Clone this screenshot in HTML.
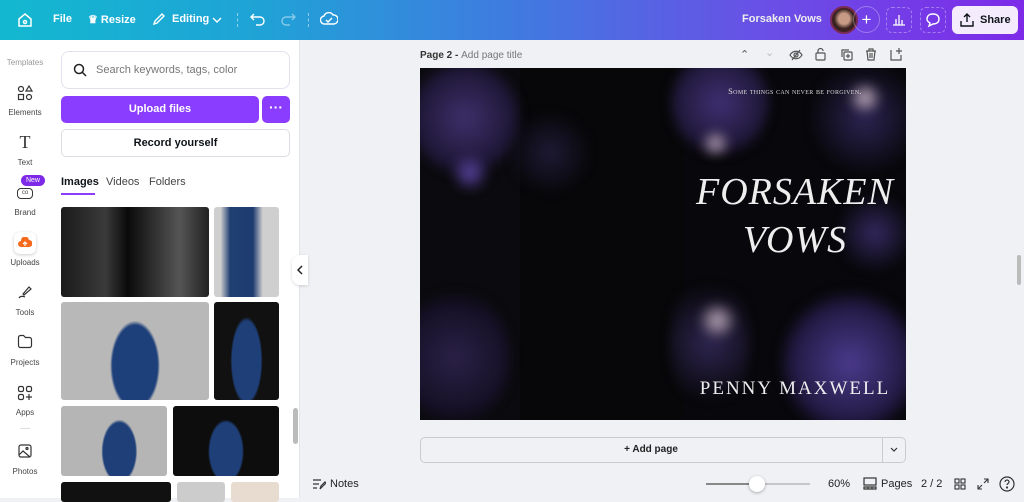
<!DOCTYPE html>
<html><head><meta charset="utf-8"><style>
*{margin:0;padding:0;box-sizing:border-box}
body{width:1024px;height:498px;overflow:hidden;font-family:"Liberation Sans",sans-serif;background:#f0f1f5;position:relative;color:#0e1318}
.hdr{position:absolute;left:0;top:0;width:1024px;height:40px;background:linear-gradient(90deg,#13b8d0 0%,#1fa3d6 25%,#3f7be0 50%,#6a4fe6 75%,#7d2ae8 100%);color:#fff;font-size:11px;font-weight:bold}
.hdr span{position:absolute;top:13px}
.ab{position:absolute;top:7px;width:26px;height:26px;border:1px dashed rgba(255,255,255,.35);border-radius:6px}
.nav{position:absolute;left:0;top:40px;width:50px;height:458px;background:#fff}
.nav div{position:absolute;left:0;width:50px;text-align:center;font-size:8px;color:#444}
.panel{position:absolute;left:50px;top:40px;width:250px;height:458px;background:#fff;border-right:1px solid #e3e4e8}
.img{position:absolute;border-radius:3px}
.cv{position:absolute;left:420px;top:68px;width:486px;height:352px;background:#050507;overflow:hidden}
.bl{position:absolute;border-radius:50%;filter:blur(5px)}
.ic{position:absolute;font-size:11px;color:#555}
</style></head><body>
<div class="hdr">
<svg style="position:absolute;left:17px;top:12px" width="16" height="16" viewBox="0 0 16 16" fill="none" stroke="#fff" stroke-width="1.5"><path d="M2 7L8 2l6 5v7H2z"/><circle cx="8" cy="10" r="1.5"/></svg>
<span style="left:53px">File</span>
<span style="left:88px">♛ Resize</span>
<svg style="position:absolute;left:152px;top:12px" width="14" height="14" viewBox="0 0 14 14" fill="none" stroke="#fff" stroke-width="1.4"><path d="M2 12l1-3 7-7 2 2-7 7z"/></svg>
<span style="left:172px">Editing</span>
<svg style="position:absolute;left:212px;top:16px" width="10" height="8" viewBox="0 0 10 8" fill="none" stroke="#fff" stroke-width="1.4"><path d="M1 2l4 4 4-4"/></svg>
<div style="position:absolute;left:237px;top:13px;width:1px;height:14px;border-left:1px dashed rgba(255,255,255,.5)"></div>
<svg style="position:absolute;left:250px;top:12px" width="16" height="14" viewBox="0 0 16 14" fill="none" stroke="#fff" stroke-width="1.4"><path d="M4 2L1 5l3 3M1 5h9a4 4 0 010 8H6"/></svg>
<svg style="position:absolute;left:280px;top:12px" width="16" height="14" viewBox="0 0 16 14" fill="none" stroke="rgba(255,255,255,.45)" stroke-width="1.4"><path d="M12 2l3 3-3 3M15 5H6a4 4 0 000 8h4"/></svg>
<div style="position:absolute;left:308px;top:13px;width:1px;height:14px;border-left:1px dashed rgba(255,255,255,.5)"></div>
<svg style="position:absolute;left:320px;top:11px" width="18" height="16" viewBox="0 0 18 16" fill="none" stroke="#fff" stroke-width="1.4"><path d="M5 13a4 4 0 01-1-8 5 5 0 019-1 4 4 0 011 9z"/><path d="M6 9l2 2 4-4"/></svg>
<span style="left:742px;font-weight:bold;color:#eee">Forsaken Vows</span>
<div style="position:absolute;left:830px;top:6px;width:28px;height:28px;border-radius:50%;background:radial-gradient(circle at 50% 45%,#c79a86 0 30%,#3a2220 55%);border:2px solid #7a2a55"></div>
<div style="position:absolute;left:853px;top:6px;width:27px;height:27px;border-radius:50%;border:1px solid rgba(255,255,255,.3);text-align:center;line-height:25px;font-size:17px;font-weight:normal">+</div>
<div class="ab" style="left:886px"></div>
<svg style="position:absolute;left:892px;top:13px" width="14" height="13" viewBox="0 0 14 13" fill="none" stroke="#fff" stroke-width="1.3"><path d="M1 12h12M4 12V6M7 12V2M10 12V7"/></svg>
<div class="ab" style="left:920px"></div>
<svg style="position:absolute;left:925px;top:12px" width="16" height="16" viewBox="0 0 16 16" fill="none" stroke="#fff" stroke-width="1.4"><path d="M8 2c4 0 6 2 6 5s-2 5-6 5l-4 2 1-3c-2-1-3-2-3-4 0-3 2-5 6-5z"/></svg>
<div style="position:absolute;left:952px;top:6px;width:66px;height:28px;border-radius:6px;background:#f4ecfd;color:#0e1318;font-size:11px;line-height:28px;padding-left:28px">Share</div>
<svg style="position:absolute;left:960px;top:13px" width="14" height="14" viewBox="0 0 14 14" fill="none" stroke="#0e1318" stroke-width="1.4"><path d="M7 9V1M4 4l3-3 3 3M1 8v5h12V8"/></svg>
</div>

<div class="nav">
<div style="top:18px;color:#999">Templates</div>
<svg style="position:absolute;left:17px;top:45px" width="16" height="16" viewBox="0 0 16 16" fill="none" stroke="#333" stroke-width="1.2"><circle cx="4" cy="4" r="2.5"/><path d="M12 1l3 5H9z"/><rect x="1.5" y="9.5" width="5" height="5"/><circle cx="12" cy="12" r="2.5"/></svg>
<div style="top:68px">Elements</div>
<div style="top:92px;font-size:18px;font-family:'Liberation Serif',serif;color:#333">T</div>
<div style="top:118px">Text</div>
<div style="top:135px;left:21px;width:24px;height:11px;border-radius:6px;background:#7d2ae8;color:#fff;font-size:7px;line-height:11px">New</div>
<div style="top:148px;left:17px;width:16px;height:11px;border:1.2px solid #333;border-radius:4px;font-size:6px;line-height:9px">co</div>
<div style="top:168px">Brand</div>
<div style="top:192px;left:14px;width:22px;height:22px;border-radius:6px;background:#fff;box-shadow:0 1px 3px rgba(0,0,0,.2)"></div>
<svg style="position:absolute;left:18px;top:197px" width="14" height="11" viewBox="0 0 14 11"><path d="M3 10a3 3 0 010-6 4 4 0 018-1 3 3 0 010 7z" fill="#f56a1d"/><path d="M7 9V5M5 7l2-2 2 2" stroke="#fff" stroke-width="1.2" fill="none"/></svg>
<div style="top:218px">Uploads</div>
<svg style="position:absolute;left:17px;top:244px" width="16" height="16" viewBox="0 0 16 16" fill="none" stroke="#333" stroke-width="1.2"><path d="M6 10l6-7 2 2-7 6zM2 14c1-2 4-2 6-1"/></svg>
<div style="top:268px">Tools</div>
<svg style="position:absolute;left:17px;top:294px" width="16" height="15" viewBox="0 0 16 15" fill="none" stroke="#333" stroke-width="1.2"><path d="M1.5 3.5a2 2 0 012-2h3l2 2h4a2 2 0 012 2v6a2 2 0 01-2 2h-9a2 2 0 01-2-2z"/></svg>
<div style="top:318px">Projects</div>
<svg style="position:absolute;left:17px;top:345px" width="16" height="16" viewBox="0 0 16 16" fill="none" stroke="#333" stroke-width="1.2"><rect x="1.5" y="1.5" width="5" height="5" rx="1.5"/><rect x="9.5" y="1.5" width="5" height="5" rx="1.5"/><rect x="1.5" y="9.5" width="5" height="5" rx="1.5"/><path d="M12 9v6M9 12h6"/></svg>
<div style="top:368px">Apps</div>
<div style="top:388px;left:20px;width:10px;height:1px;background:#ddd"></div>
<svg style="position:absolute;left:18px;top:404px" width="14" height="14" viewBox="0 0 14 14" fill="none" stroke="#333" stroke-width="1.2"><rect x="1" y="1" width="12" height="12" rx="2"/><circle cx="9" cy="4.5" r="1"/><path d="M1 11l4-4 7 6"/></svg>
<div style="top:427px">Photos</div>
</div>

<div class="panel">
<div style="position:absolute;left:11px;top:11px;width:229px;height:38px;border:1px solid #e2e1f0;border-radius:8px"></div>
<svg style="position:absolute;left:23px;top:23px" width="14" height="14" viewBox="0 0 14 14" fill="none" stroke="#222" stroke-width="1.5"><circle cx="6" cy="6" r="4.5"/><path d="M9.5 9.5L13 13"/></svg>
<div style="position:absolute;left:46px;top:24px;font-size:11px;color:#777">Search keywords, tags, color</div>
<div style="position:absolute;left:11px;top:56px;width:198px;height:27px;border-radius:5px;background:#8b3dff;color:#fff;font-size:11px;font-weight:bold;text-align:center;line-height:27px">Upload files</div>
<div style="position:absolute;left:212px;top:56px;width:28px;height:27px;border-radius:5px;background:#8b3dff;color:#fff;font-size:14px;font-weight:bold;text-align:center;line-height:22px">···</div>
<div style="position:absolute;left:11px;top:89px;width:229px;height:28px;border-radius:5px;border:1px solid #dcdde3;font-size:11px;font-weight:bold;text-align:center;line-height:26px">Record yourself</div>
<div style="position:absolute;left:11px;top:136px;font-size:11px;font-weight:bold">Images</div>
<div style="position:absolute;left:11px;top:153px;width:34px;height:2px;background:#8b3dff"></div>
<div style="position:absolute;left:56px;top:136px;font-size:11px;color:#444">Videos</div>
<div style="position:absolute;left:99px;top:136px;font-size:11px;color:#444">Folders</div>
<div class="img" style="left:11px;top:167px;width:148px;height:90px;background:linear-gradient(90deg,#1b1b1b,#3a3a3a 30%,#0a0a0a 45%,#2a2a2a 60%,#555 80%,#222);"></div>
<div class="img" style="left:164px;top:167px;width:65px;height:90px;background:linear-gradient(90deg,#cfcfcf 10%,#1f3e72 25%,#1e3c70 60%,#cfcfcf 75%)"></div>
<div class="img" style="left:11px;top:262px;width:148px;height:98px;background:radial-gradient(ellipse 25px 45px at 50% 65%,#1d3f7a 90%,transparent),#b8b8b8"></div>
<div class="img" style="left:164px;top:262px;width:65px;height:98px;background:radial-gradient(ellipse 16px 44px at 50% 60%,#1e3f78 90%,transparent),#111"></div>
<div class="img" style="left:11px;top:366px;width:106px;height:70px;background:radial-gradient(ellipse 18px 32px at 55% 65%,#1e3f78 90%,transparent),#b5b5b5"></div>
<div class="img" style="left:123px;top:366px;width:106px;height:70px;background:radial-gradient(ellipse 18px 32px at 50% 65%,#1e3f78 90%,transparent),#0d0d0d"></div>
<div class="img" style="left:11px;top:442px;width:110px;height:20px;background:#111"></div>
<div class="img" style="left:127px;top:442px;width:48px;height:20px;background:#ccc"></div>
<div class="img" style="left:181px;top:442px;width:48px;height:20px;background:#e8dcd0"></div>
<div style="position:absolute;left:243px;top:368px;width:5px;height:36px;border-radius:3px;background:#bbb"></div>
</div>
<div style="position:absolute;left:292px;top:255px;width:16px;height:30px;border-radius:8px 0 0 8px;background:#fff;box-shadow:0 1px 3px rgba(0,0,0,.15)"></div>
<svg style="position:absolute;left:297px;top:265px" width="7" height="10" viewBox="0 0 7 10" fill="none" stroke="#222" stroke-width="1.5"><path d="M5 1L1 5l4 4"/></svg>

<div style="position:absolute;left:420px;top:50px;font-size:10px;font-weight:bold;color:#333">Page 2 - <span style="font-weight:normal;color:#777">Add page title</span></div>
<div class="ic" style="left:740px;top:48px">⌃</div><div class="ic" style="left:765px;top:46px;color:#bbb">⌄</div>
<svg style="position:absolute;left:789px;top:49px" width="14" height="12" viewBox="0 0 14 12" fill="none" stroke="#555" stroke-width="1.2"><path d="M1 6c3-5 9-5 12 0-3 5-9 5-12 0z"/><circle cx="7" cy="6" r="2"/><path d="M3 11L11 1"/></svg>
<svg style="position:absolute;left:815px;top:47px" width="11" height="14" viewBox="0 0 11 14" fill="none" stroke="#555" stroke-width="1.2"><rect x="1" y="6" width="9" height="7" rx="1"/><path d="M3 6V4a2.5 2.5 0 015 0"/></svg>
<svg style="position:absolute;left:840px;top:48px" width="13" height="13" viewBox="0 0 13 13" fill="none" stroke="#555" stroke-width="1.2"><rect x="4" y="4" width="8" height="8" rx="1"/><path d="M2 9V2h7M8 6v4M6 8h4"/></svg>
<svg style="position:absolute;left:865px;top:48px" width="12" height="13" viewBox="0 0 12 13" fill="none" stroke="#555" stroke-width="1.2"><path d="M1 3h10M4 3V1h4v2M2 3l1 9h6l1-9M5 5v5M7 5v5"/></svg>
<svg style="position:absolute;left:890px;top:47px" width="13" height="14" viewBox="0 0 13 14" fill="none" stroke="#555" stroke-width="1.2"><path d="M1 3v10h10V8M9 1v6M6 4h6"/></svg>

<div class="cv">
<div style="position:absolute;left:0;top:0;width:264px;height:352px;background:#0b0a0e"></div>
<div style="position:absolute;left:100px;top:0;width:164px;height:352px;background:#070709"></div>
<div class="bl" style="left:-10px;top:-10px;width:110px;height:120px;background:radial-gradient(circle,#3d2f6a,#1e1736 60%,transparent 72%)"></div>
<div class="bl" style="left:90px;top:40px;width:80px;height:90px;background:radial-gradient(circle,#1f1a35,transparent 70%)"></div>
<div class="bl" style="left:30px;top:85px;width:40px;height:40px;background:radial-gradient(circle,#5b46a6,transparent 70%)"></div>
<div class="bl" style="left:-20px;top:220px;width:110px;height:140px;background:radial-gradient(circle,#2a2147,#151025 60%,transparent 75%)"></div>
<div class="bl" style="left:264px;top:0;width:0;height:0"></div>
<div style="position:absolute;left:264px;top:0;width:222px;height:352px;background:#08070b"></div>
<div class="bl" style="left:250px;top:-20px;width:100px;height:110px;background:radial-gradient(circle,#3e2f72,#1f1838 60%,transparent 72%)"></div>
<div class="bl" style="left:390px;top:-10px;width:110px;height:120px;background:radial-gradient(circle,#2c2452,transparent 70%)"></div>
<div class="bl" style="left:250px;top:200px;width:80px;height:150px;background:radial-gradient(circle,#2e2650,transparent 70%)"></div>
<div class="bl" style="left:360px;top:220px;width:140px;height:150px;background:radial-gradient(circle,#4a3a8c,#231b45 55%,transparent 72%)"></div>
<div class="bl" style="left:420px;top:120px;width:70px;height:90px;background:radial-gradient(circle,#33295e,transparent 70%)"></div>
<div class="bl" style="left:425px;top:15px;width:40px;height:30px;background:radial-gradient(circle,#c8b4c4,transparent 70%)"></div>
<div class="bl" style="left:278px;top:63px;width:35px;height:25px;background:radial-gradient(circle,#b8a4b6,transparent 70%)"></div>
<div class="bl" style="left:275px;top:235px;width:45px;height:35px;background:radial-gradient(circle,#c0acbc,transparent 70%)"></div>
<div style="position:absolute;left:264px;top:18px;width:222px;text-align:center;font-family:'Liberation Serif',serif;font-size:8.5px;color:#ddd;font-variant:small-caps;letter-spacing:.3px">Some things can never be forgiven.</div>
<div style="position:absolute;left:264px;top:100px;width:222px;text-align:center;font-family:'Liberation Serif',serif;font-style:italic;font-size:38px;color:#eee;line-height:48px;letter-spacing:1px;font-weight:normal">FORSAKEN<br>VOWS</div>
<div style="position:absolute;left:264px;top:310px;width:222px;text-align:center;font-family:'Liberation Serif',serif;font-size:19px;color:#eee;letter-spacing:2px">PENNY MAXWELL</div>
</div>

<div style="position:absolute;left:420px;top:437px;width:486px;height:26px;border:1px solid #c9cbd1;border-radius:5px;background:#f0f1f5"></div>
<div style="position:absolute;left:882px;top:437px;width:1px;height:26px;background:#c9cbd1"></div>
<div style="position:absolute;left:420px;top:444px;width:462px;text-align:center;font-size:10px;font-weight:bold;color:#222">+ Add page</div>
<svg style="position:absolute;left:890px;top:447px" width="8" height="5" viewBox="0 0 8 5" fill="none" stroke="#333" stroke-width="1.2"><path d="M1 1l3 3 3-3"/></svg>
<div style="position:absolute;left:1017px;top:255px;width:4px;height:30px;border-radius:2px;background:#bbb"></div>

<svg style="position:absolute;left:312px;top:478px" width="14" height="12" viewBox="0 0 14 12" fill="none" stroke="#333" stroke-width="1.2"><path d="M1 2h8M1 6h6M1 10h4M8 11l1-3 4-4 1 1-4 4z"/></svg>
<div style="position:absolute;left:330px;top:478px;font-size:11px;color:#222">Notes</div>
<div style="position:absolute;left:706px;top:483px;width:104px;height:2px;background:#c5c6cc"></div>
<div style="position:absolute;left:706px;top:483px;width:50px;height:2px;background:#888"></div>
<div style="position:absolute;left:749px;top:476px;width:16px;height:16px;border-radius:50%;background:#fff;box-shadow:0 1px 3px rgba(0,0,0,.3)"></div>
<div style="position:absolute;left:828px;top:478px;font-size:11px;color:#222">60%</div>
<svg style="position:absolute;left:863px;top:477px" width="14" height="13" viewBox="0 0 14 13" fill="none" stroke="#333" stroke-width="1.2"><rect x="1" y="1" width="12" height="7"/><path d="M1 10h12v2H1zM5 10v2M9 10v2"/></svg>
<div style="position:absolute;left:881px;top:478px;font-size:11px;color:#222">Pages</div>
<div style="position:absolute;left:921px;top:478px;font-size:11px;color:#222">2 / 2</div>
<svg style="position:absolute;left:954px;top:478px" width="12" height="12" viewBox="0 0 12 12" fill="none" stroke="#333" stroke-width="1.1"><rect x="1" y="1" width="4" height="4"/><rect x="7" y="1" width="4" height="4"/><rect x="1" y="7" width="4" height="4"/><rect x="7" y="7" width="4" height="4"/></svg>
<svg style="position:absolute;left:977px;top:478px" width="12" height="12" viewBox="0 0 12 12" fill="none" stroke="#333" stroke-width="1.1"><path d="M7 1h4v4M11 1L7 5M5 11H1V7M1 11l4-4"/></svg>
<svg style="position:absolute;left:999px;top:476px" width="16" height="16" viewBox="0 0 16 16" fill="none" stroke="#333" stroke-width="1.2"><circle cx="8" cy="8" r="7"/><path d="M6 6a2 2 0 114 0c0 1.5-2 1.5-2 3"/><circle cx="8" cy="11.5" r=".5"/></svg>
</body></html>
